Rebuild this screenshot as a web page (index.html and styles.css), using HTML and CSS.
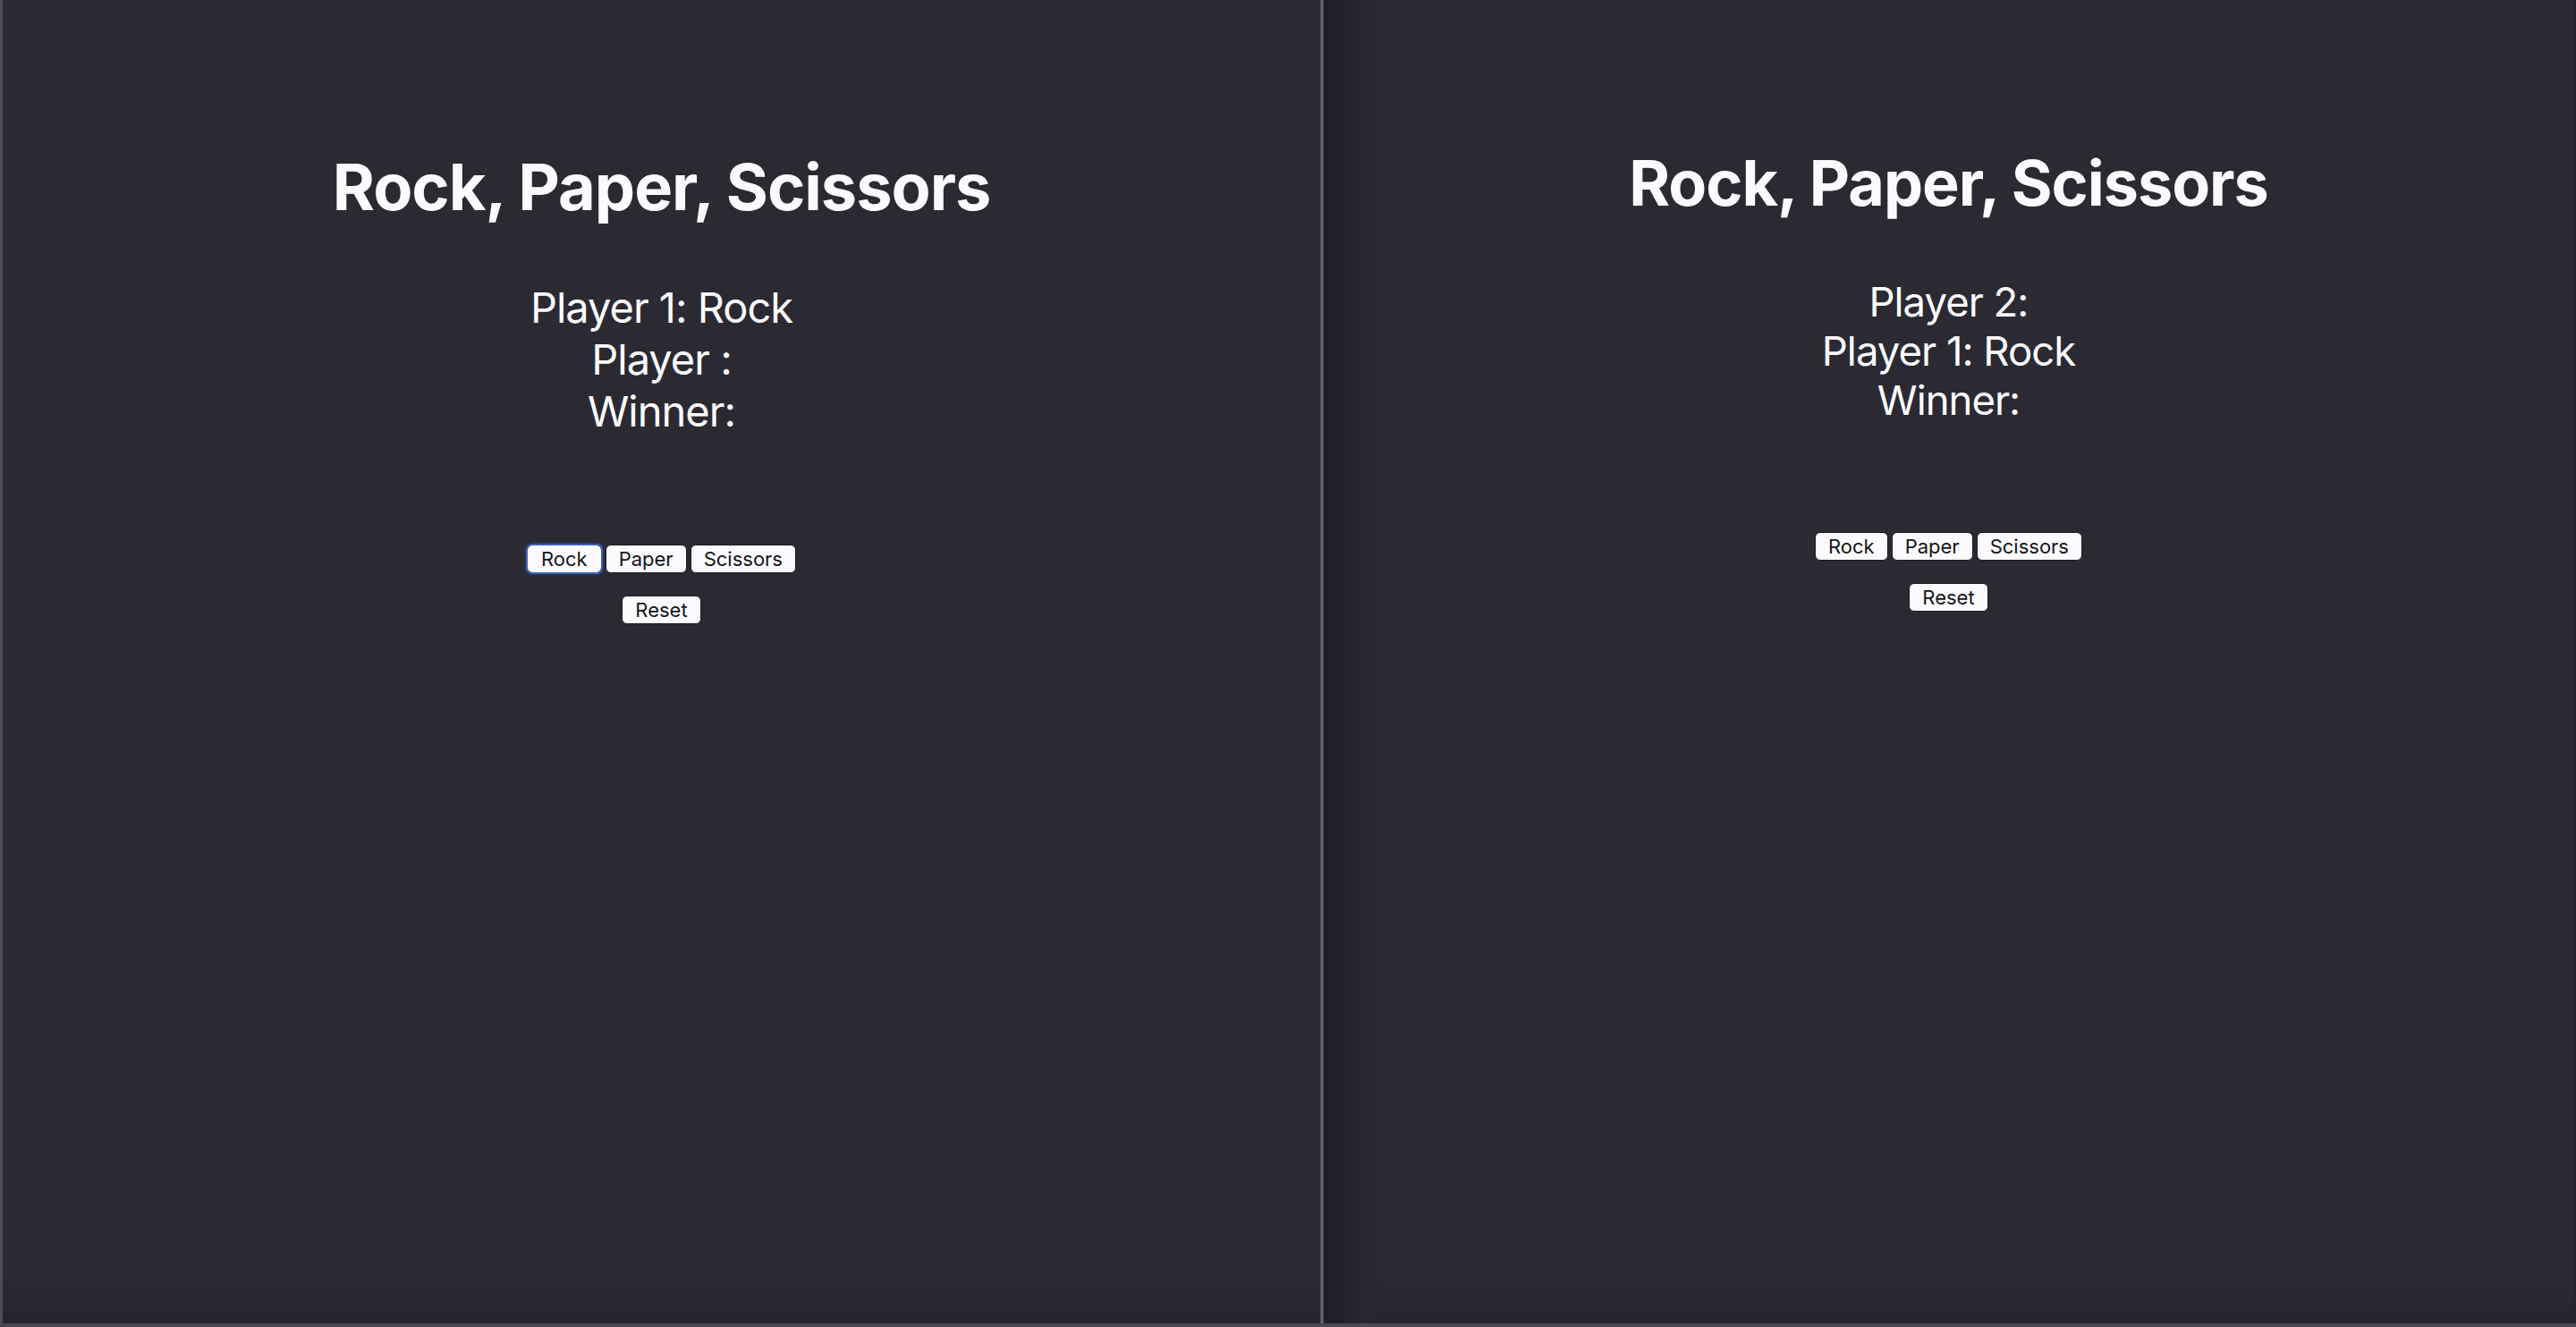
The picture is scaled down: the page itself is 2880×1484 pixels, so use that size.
FILE: index.html
```html
<!DOCTYPE html>
<html lang="en">
<head>
<meta charset="utf-8">
<title>Rock, Paper, Scissors</title>
<link rel="stylesheet" href="styles.css">
</head>
<body>
<div class="screen">
  <section class="pane pane-left">
    <h1 class="title">Rock, Paper, Scissors</h1>
    <div class="status">
      <p class="line">Player 1: Rock</p>
      <p class="line">Player :</p>
      <p class="line">Winner:</p>
    </div>
    <div class="choices">
      <button class="btn btn-focus">Rock</button>
      <button class="btn">Paper</button>
      <button class="btn">Scissors</button>
    </div>
    <div class="reset-row">
      <button class="btn">Reset</button>
    </div>
  </section>
  <div class="divider"></div>
  <section class="pane pane-right">
    <h1 class="title">Rock, Paper, Scissors</h1>
    <div class="status">
      <p class="line">Player 2:</p>
      <p class="line">Player 1: Rock</p>
      <p class="line">Winner:</p>
    </div>
    <div class="choices">
      <button class="btn">Rock</button>
      <button class="btn">Paper</button>
      <button class="btn">Scissors</button>
    </div>
    <div class="reset-row">
      <button class="btn">Reset</button>
    </div>
  </section>
</div>
</body>
</html>
```

FILE: styles.css
```css
html, body {
  margin: 0;
  padding: 0;
  background: #2b2a33;
}

body {
  width: 2880px;
  height: 1484px;
  overflow: hidden;
  font-family: Inter, "Liberation Sans", sans-serif;
  color: #fbfbfe;
}

.screen {
  display: flex;
  height: 1480px;
  border-bottom: 4px solid #4a4951;
}

.pane {
  display: flex;
  flex-direction: column;
  align-items: center;
  background: linear-gradient(to bottom, #2b2a33 0, #2b2a33 1430px, #26252d 1480px);
}

.pane-left {
  width: 1473px;
  border-left: 3px solid #4d4c55;
  padding-top: 165px;
}

.divider {
  width: 4px;
  background: linear-gradient(to right, #4f4e57 0, #6a6972 50%, #4f4e57 100%);
}

.pane-right {
  flex: 1;
  padding-top: 162px;
  position: relative;
  border-right: 3px solid #25242c;
}

.pane-right::before {
  content: "";
  position: absolute;
  left: 0;
  top: 0;
  bottom: 0;
  width: 72px;
  background: linear-gradient(to right, #1f1e26 0, #22212a 30%, #28272f 60%, rgba(43, 42, 51, 0) 100%);
  pointer-events: none;
}

.title {
  margin: 0;
  font-weight: 700;
  font-size: 72px;
  line-height: 88px;
  letter-spacing: -1px;
}

.pane-right .title {
  font-size: 70px;
  line-height: 86px;
}

.status {
  margin-top: 62px;
  text-align: center;
}

.line {
  margin: 0;
  font-size: 47px;
  line-height: 58px;
  font-weight: 400;
  letter-spacing: -1px;
}

.pane-right .line {
  font-size: 45.5px;
  line-height: 55px;
}

.choices {
  margin-top: 120px;
  display: flex;
  gap: 4px;
}

.reset-row {
  margin-top: 25px;
  display: flex;
}

.btn {
  font-family: Inter, "Liberation Sans", sans-serif;
  font-size: 22px;
  height: 32px;
  padding: 0 14px;
  background: #fbfbfe;
  color: #15141a;
  border: 1px solid #1c1b22;
  border-radius: 6px;
  line-height: 30px;
}

.btn-focus {
  padding: 0 15px;
  outline: 2px solid #3d62b3;
  outline-offset: -1px;
  box-shadow: 0 0 4px 2px rgba(61, 98, 179, 0.3);
}
```
